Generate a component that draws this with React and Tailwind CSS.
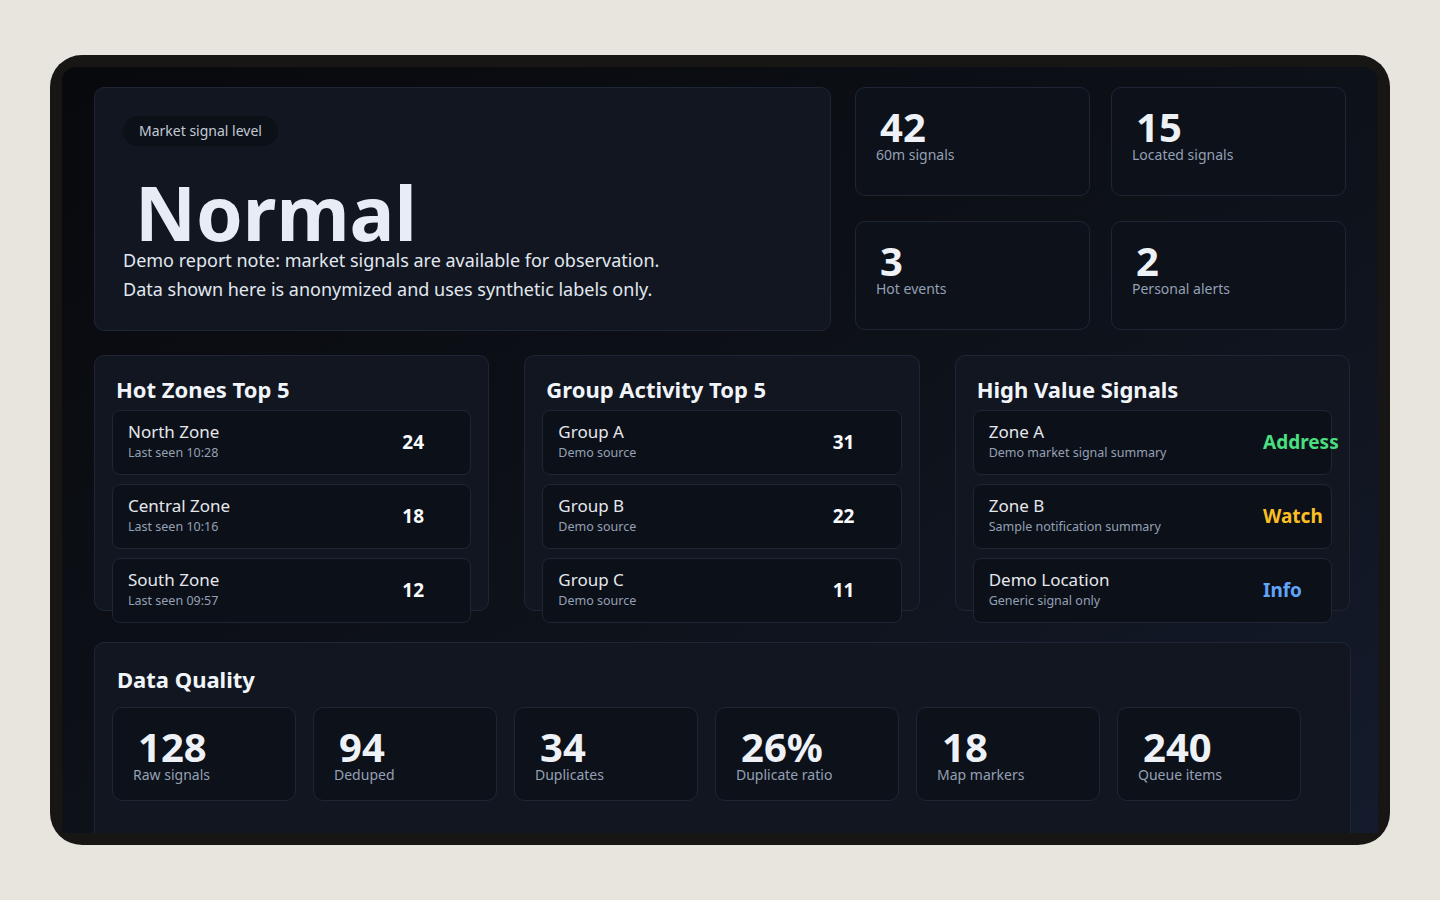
import React from "react";

const stats = [
  { value: "42", label: "60m signals" },
  { value: "15", label: "Located signals" },
  { value: "3", label: "Hot events" },
  { value: "2", label: "Personal alerts" },
];

const zones = [
  { title: "North Zone", sub: "Last seen 10:28", value: "24" },
  { title: "Central Zone", sub: "Last seen 10:16", value: "18" },
  { title: "South Zone", sub: "Last seen 09:57", value: "12" },
];

const groups = [
  { title: "Group A", sub: "Demo source", value: "31" },
  { title: "Group B", sub: "Demo source", value: "22" },
  { title: "Group C", sub: "Demo source", value: "11" },
];

const signals = [
  { title: "Zone A", sub: "Demo market signal summary", value: "Address", tone: "text-[#4ade80]" },
  { title: "Zone B", sub: "Sample notification summary", value: "Watch", tone: "text-[#fbbf24]" },
  { title: "Demo Location", sub: "Generic signal only", value: "Info", tone: "text-[#60a5fa]" },
];

const quality = [
  { value: "128", label: "Raw signals" },
  { value: "94", label: "Deduped" },
  { value: "34", label: "Duplicates" },
  { value: "26%", label: "Duplicate ratio" },
  { value: "18", label: "Map markers" },
  { value: "240", label: "Queue items" },
];

function StatCard({ value, label }) {
  return (
    <div className="h-[109px] rounded-[10px] border border-[#1e2636] bg-[#0d111a] px-5 pt-[22px]">
      <div className="pl-1 text-[40px] font-bold leading-[34px] text-[#eef2f7]">{value}</div>
      <div className="mt-[2px] text-[14px] leading-[18px] text-[#94a0b4]">{label}</div>
    </div>
  );
}

function ListPanel({ title, rows }) {
  return (
    <div className="h-[256px] w-[396px] rounded-[10px] border border-[#1e2636] bg-[#111621] px-[17px] pt-[19px]">
      <h2 className="px-1 text-[22px] font-bold leading-[28px] text-[#f1f5f9]">{title}</h2>
      <div className="mt-[7px] flex flex-col gap-[9px]">
        {rows.map((r) => (
          <div
            key={r.title}
            className="flex h-[65px] items-center justify-between rounded-[8px] border border-[#1e2636] bg-[#0c1019] pl-[15px] pr-3"
          >
            <div className="-mt-[3px]">
              <div className="text-[17px] leading-[22px] text-[#e5e7eb]">{r.title}</div>
              <div className="mt-[1px] text-[12.5px] leading-[18px] text-[#94a0b4]">{r.sub}</div>
            </div>
            <div className={`w-[56px] whitespace-nowrap text-[19px] font-bold ${r.tone || "text-[#f8fafc]"}`}>
              {r.value}
            </div>
          </div>
        ))}
      </div>
    </div>
  );
}

export default function App() {
  return (
    <div
      className="flex h-[900px] w-[1440px] items-start justify-center bg-[#e8e5df] pt-[55px]"
      style={{ fontFamily: '"Noto Sans", "Open Sans", sans-serif' }}
    >
      {/* device frame */}
      <div className="h-[790px] w-[1340px] rounded-[32px] bg-[#171614] p-3">
        <div className="h-[766px] overflow-hidden rounded-t-[14px] bg-gradient-to-br from-[#08090d] via-[#0d1118] to-[#141b2c] pl-8 pr-7 pt-5">
          {/* top row */}
          <div className="flex">
            <div className="h-[244px] w-[737px] rounded-[10px] border border-[#1e2636] bg-[#111621] px-7 pt-7">
              <span className="inline-block rounded-full bg-[#0c1017] px-4 py-[5px] text-[14px] leading-[20px] text-[#c3cad6]">
                Market signal level
              </span>
              <div className="ml-[12px] mt-[34px] text-[75px] font-bold leading-[64px] text-[#e8edf5]">Normal</div>
              <p className="mt-[2px] text-[18px] leading-[29px] text-[#e2e8f0]">
                Demo report note: market signals are available for observation.
                <br />
                Data shown here is anonymized and uses synthetic labels only.
              </p>
            </div>
            <div className="ml-[24px] grid grid-cols-[235px_235px] gap-x-[21px] gap-y-[24px]">
              {stats.map((s) => (
                <StatCard key={s.label} {...s} />
              ))}
            </div>
          </div>

          {/* middle row */}
          <div className="mt-[24px] flex gap-[35px]">
            <ListPanel title="Hot Zones Top 5" rows={zones} />
            <ListPanel title="Group Activity Top 5" rows={groups} />
            <ListPanel title="High Value Signals" rows={signals} />
          </div>

          {/* data quality */}
          <div className="mt-[31px] h-[220px] w-[1257px] rounded-[10px] border border-[#1e2636] bg-[#111621] px-[17px] pt-[22px]">
            <h2 className="px-[5px] text-[22px] font-bold leading-[28px] text-[#f1f5f9]">Data Quality</h2>
            <div className="mt-[14px] flex gap-[17px]">
              {quality.map((q) => (
                <div
                  key={q.label}
                  className="h-[94px] w-[184px] rounded-[10px] border border-[#1e2636] bg-[#0d111a] px-5 pt-[22px]"
                >
                  <div className="pl-[5px] text-[40px] font-bold leading-[34px] text-[#eef2f7]">{q.value}</div>
                  <div className="mt-[2px] text-[14px] leading-[18px] text-[#94a0b4]">{q.label}</div>
                </div>
              ))}
            </div>
          </div>
        </div>
      </div>
    </div>
  );
}
